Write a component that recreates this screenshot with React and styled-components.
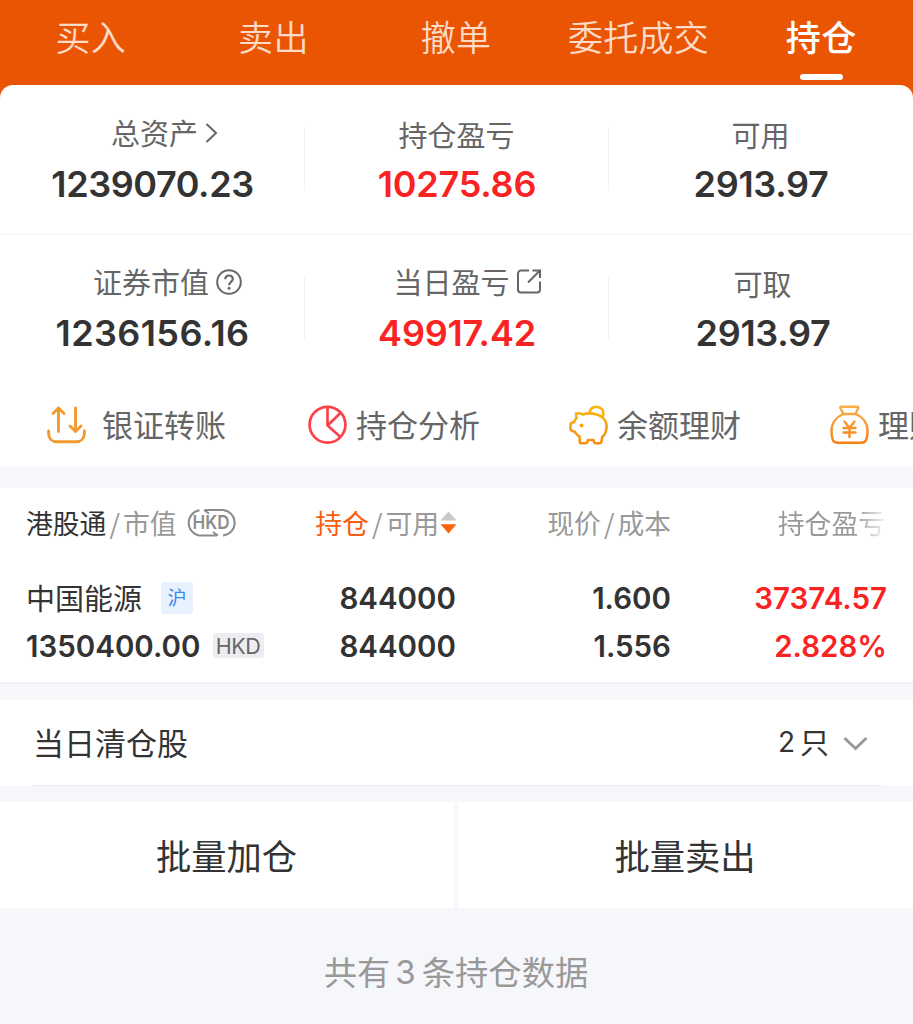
import React from 'react'
import styled, { createGlobalStyle } from 'styled-components'

const BRAND = '#ea5504'
const RED = '#fa2323'
const INK = '#333'
const GREY = '#666'
const LIGHT = '#999'
const CJK = '"Noto Sans CJK SC", sans-serif'
const NUM = 'Inter, "Noto Sans CJK SC", sans-serif'

const GlobalStyle = createGlobalStyle`
  * {
    box-sizing: border-box;
  }
  body {
    margin: 0;
    background: #f6f7fa;
    font-family: ${CJK};
    color: ${INK};
  }
`

const Page = styled.div`
  width: 913px;
  height: 1024px;
  overflow: hidden;
  white-space: nowrap;
`

const Top = styled.div`
  background: ${BRAND};
`

const Tabs = styled.nav`
  display: grid;
  grid-template-columns: repeat(5, 182.6px);
  height: 85px;
`

const Tab = styled.div`
  display: flex;
  flex-direction: column;
  align-items: center;
  padding: 11px 1px 0 0;
  font-size: 35px;
  line-height: 50px;
  letter-spacing: 0.3px;
  color: ${p => (p.$active ? '#fff' : '#fcdcc8')};
  font-weight: ${p => (p.$active ? 500 : 350)};
`

const TabBar = styled.div`
  width: 43px;
  height: 6px;
  margin: 13px 0 0 1px;
  border-radius: 3px;
  background: #fff;
`

const Summary = styled.section`
  height: 382px;
  border-radius: 13px 13px 0 0;
  background: #fff;
`

const StatRow = styled.div`
  display: grid;
  grid-template-columns: 305px 304px 304px;
  height: ${p => p.$height}px;
  border-bottom: ${p => (p.$line ? '2px solid #f7f7f7' : 'none')};
`

const Stat = styled.div`
  display: flex;
  flex-direction: column;
  align-items: center;
  padding-top: ${p => p.$top}px;
  padding-left: ${p => p.$indent || 0}px;
  background: linear-gradient(#f2f2f2, #f2f2f2) no-repeat right ${p => p.$top + 12}px / ${p => (p.$last ? '0 0' : '1px 64px')};
`

const StatLabel = styled.div`
  display: flex;
  align-items: center;
  height: 40px;
  padding-bottom: ${p => (p.$lift ? 7 : 3)}px;
  padding-left: ${p => p.$indent || 0}px;
  padding-right: 1px;
  font-size: 29px;
  line-height: 34px;
  color: ${GREY};

  svg {
    margin: 2px 0 0 ${p => p.$gap || 0}px;
  }
`

const StatValue = styled.div`
  margin-top: 9px;
  font: 600 36px/40px ${NUM};
  letter-spacing: ${p => p.$spacing || 0}px;
  color: ${p => (p.$up ? RED : INK)};
`

const Tools = styled.div`
  display: flex;
  padding: 16px 0 0 47px;
  overflow: hidden;
`

const Tool = styled.div`
  display: flex;
  align-items: center;
  flex: none;
  gap: ${p => p.$gap || 8}px;
  width: 261px;
  height: 48px;
  font-size: 31px;
  line-height: 46px;
  color: ${GREY};

  svg {
    flex: none;
  }
`

const ToolText = styled.span`
  padding-bottom: 2px;
`

const Holdings = styled.section`
  height: 196px;
  margin-top: 21px;
  padding-left: 26px;
  background: #fff;
  border-bottom: 2px solid #f0f1f4;
`

const Columns = styled.div`
  display: grid;
  grid-template-columns: 250px 180px 215px 216px;
  align-items: center;
  height: 48px;
`

const HeadRow = styled(Columns)`
  height: 69px;
  margin-bottom: 17px;
  font-size: 26.8px;
  line-height: 40px;
  color: ${LIGHT};

  svg {
    flex: none;
  }
`

const HeadCell = styled.div`
  display: flex;
  align-items: center;
  justify-content: ${p => (p.$left ? 'flex-start' : 'flex-end')};
  margin-right: ${p => p.$shift || 0}px;
`

const HeadText = styled.span`
  margin-right: ${p => p.$gap || 0}px;
`

const Strong = styled.span`
  color: ${p => (p.$brand ? '#f75d0c' : INK)};
`

const Slash = styled.span`
  margin: 0 3px;
`

const Faded = styled.span`
  background: linear-gradient(90deg, ${LIGHT} 72%, #f2f2f2 100%);
  background-clip: text;
  color: transparent;
`

const NameCell = styled.div`
  display: flex;
  align-items: center;
  font-size: 29px;
  line-height: 40px;
`

const StockName = styled.span`
  padding-bottom: 2px;
`

const Figure = styled.div`
  justify-self: ${p => (p.$left ? 'start' : 'end')};
  font: 600 29.5px/40px ${NUM};
  color: ${p => (p.$up ? RED : INK)};
`

const Market = styled.span`
  width: 32px;
  height: 32px;
  margin-left: 19px;
  border-radius: 3px;
  background: #e8f1fe;
  color: #3a87ea;
  font-size: 19px;
  line-height: 30px;
  text-align: center;
`

const Currency = styled.span`
  width: 51px;
  height: 25px;
  margin: 0 0 2px 12px;
  border-radius: 3px;
  background: #ededf1;
  color: ${GREY};
  font: 400 21.5px/26px ${NUM};
  letter-spacing: -0.4px;
  text-align: center;
`

const Cleared = styled.section`
  display: flex;
  align-items: center;
  justify-content: space-between;
  height: 86px;
  margin-top: 16px;
  padding: 0 45px 2px 33px;
  background: linear-gradient(#ececee, #ececee) no-repeat 32px 100% / 849px 1px, #fff;
  font-size: 31px;
  line-height: 48px;
`

const Count = styled.div`
  display: flex;
  align-items: center;
  padding-bottom: 2px;
  font-size: 29px;

  b {
    margin: 2px 5px 0 0;
    font: 400 28px/48px ${NUM};
  }

  svg {
    margin: 5px 0 0 14px;
  }
`

const Actions = styled.div`
  display: grid;
  grid-template-columns: 454px 455px;
  gap: 4px;
  margin-top: 16px;
`

const Action = styled.button`
  height: 106px;
  padding: 0 1px 0 0;
  border: 0;
  background: #fff;
  color: ${INK};
  font: 400 35.3px/50px ${CJK};
`

const Footer = styled.footer`
  display: flex;
  justify-content: center;
  padding: 39px 1px 0 0;
  font-size: 33.3px;
  line-height: 48px;
  color: ${LIGHT};

  b {
    margin: 0 6px 0 5px;
    font: 400 33px/50px ${NUM};
  }
`

const Chevron = () => (
  <svg width="13" height="20" viewBox="0 0 13 20" fill="none" stroke={GREY} strokeWidth="2">
    <path d="M1.5 1L11 10L1.5 19" />
  </svg>
)

const Help = () => (
  <svg width="26" height="26" viewBox="0 0 26 26" fill="none" stroke={GREY} strokeWidth="2">
    <circle cx="13" cy="13" r="11.8" />
    <path d="M9.3 10.3C9.3 8 10.8 6.5 13 6.5S16.8 8 16.8 10.1C16.8 12.7 13.1 13 13.1 16.2" strokeWidth="2.2" />
    <circle cx="13.1" cy="19.3" r="1.5" fill={GREY} stroke="none" />
  </svg>
)

const OpenOut = () => (
  <svg width="24" height="25" viewBox="0 0 24 25" fill="none" stroke={GREY} strokeWidth="2">
    <path d="M12 1.5H4A3 3 0 0 0 1 4.5V20.5A3 3 0 0 0 4 23.5H20A3 3 0 0 0 23 20.5V12.5" />
    <path d="M15.5 1.5H23V9M22.5 2L11 13.5" />
  </svg>
)

const Transfer = () => (
  <svg width="39" height="40" viewBox="0 0 39 40" fill="none" stroke="#f29a2e" strokeWidth="2.9" strokeLinecap="round" strokeLinejoin="round">
    <path d="M11.5 26.5V3M6 8.5L11.5 3L17 8.5" />
    <path d="M28.5 3V26.5M23 21L28.5 26.5L34 21" />
    <path d="M1.6 26V28.5C1.6 33.5 5 36.8 10 36.8H29C34 36.8 37.4 33.5 37.4 28.5V26" />
  </svg>
)

const Pie = () => (
  <svg width="39" height="40" viewBox="0 0 39 40" fill="none" stroke="#fb4248" strokeWidth="2.7">
    <circle cx="19.5" cy="19.7" r="17.9" />
    <path d="M19.5 2V20.5L32.5 32M19.5 20.5L32.5 8" />
  </svg>
)

const Piggy = () => (
  <svg width="40" height="40" viewBox="0 0 40 40" fill="none" stroke="url(#piggy)" strokeWidth="2.6" strokeLinejoin="round" strokeLinecap="round">
    <defs>
      <linearGradient id="piggy" x1="0" y1="0" x2="0" y2="40" gradientUnits="userSpaceOnUse">
        <stop offset="0" stopColor="#fbb90e" />
        <stop offset="1" stopColor="#f58a18" />
      </linearGradient>
    </defs>
    <path d="M7 8.5C9.5 8 12 8.5 13.5 9.5C20 7.5 28 8.3 33 12C36.5 14.7 38 18.5 37.5 23C37.2 27.5 35.5 30 33.2 32L32.3 37.3Q32 38.2 31 38.2H26.5Q25.5 38.2 25.2 37.3L24.5 35H19L18.2 37.3Q17.8 38.2 16.8 38.2H12Q11 38.2 10.9 37.2L10.5 31.5C8.5 30.5 7 29 6 27L2.5 25.5Q1.5 25 1.5 24V19.5Q1.5 18.3 2.5 18L5 17C5.5 15.5 6.5 14.3 7.5 13.2Z" />
    <path d="M20.5 8.2C21 4.5 23.5 1.9 27.5 1.9C32 1.9 35 5.5 34.3 9.5C34.1 10.7 33.7 11.5 33.2 12" />
    <circle cx="12.5" cy="20.5" r="2" fill="#f9a313" stroke="none" />
  </svg>
)

const MoneyBag = () => (
  <svg width="39" height="40" viewBox="0 0 39 40" fill="none" stroke="url(#bag)" strokeWidth="2.4" strokeLinejoin="round" strokeLinecap="round">
    <defs>
      <linearGradient id="bag" x1="0" y1="0" x2="0" y2="40" gradientUnits="userSpaceOnUse">
        <stop offset="0" stopColor="#f8b04a" />
        <stop offset="1" stopColor="#f87d16" />
      </linearGradient>
    </defs>
    <path d="M11.3 1.8H27.2Q28.8 1.8 28.1 3.3L25.5 9H13.5L10.4 3.3Q9.8 1.8 11.3 1.8Z" />
    <path d="M13.5 9C6 12 1.5 18.5 1.5 26C1.5 30 2 33 2.8 35C3.8 37.3 5.5 37.7 8 37.7H31C33.5 37.7 35.2 37.3 36 35C37 33 37.5 30 37.5 26C37.5 18.5 33 12 25.5 9" />
    <path d="M14.5 16.5L19.5 23L24.5 16.5M13.5 23H25.5M13.5 27.5H25.5M19.5 23V32" />
  </svg>
)

const HkdPill = () => (
  <svg width="52" height="30" viewBox="0 0 52 30" fill="none" stroke="#8c8c8c" strokeWidth="2">
    <path d="M14.5 2.3A12.8 12.8 0 0 0 14 27.5H32M20 2H38A12.8 12.8 0 0 1 38 27.5M19 2L24 5.5M33 27.5L28 24" />
    <text x="26" y="21.4" textAnchor="middle" textLength="37" lengthAdjust="spacingAndGlyphs" fontFamily="Inter, sans-serif" fontSize="19" fontWeight="600" fill="#8c8c8c" stroke="none">HKD</text>
  </svg>
)

const SortArrows = () => (
  <svg width="17" height="24" viewBox="0 0 17 24">
    <path d="M8.5 0.5L16.5 9.5H0.5Z" fill="#c8c8c8" />
    <path d="M0.5 13.3H16.5L8.5 22.5Z" fill="#fb640f" />
  </svg>
)

const Down = () => (
  <svg width="25" height="15" viewBox="0 0 25 15" fill="none" stroke={LIGHT} strokeWidth="3">
    <path d="M1.5 2L12.5 12.5L23.5 2" />
  </svg>
)

const tabs = ['买入', '卖出', '撤单', '委托成交', '持仓']

const tools = [
  { text: '银证转账', icon: <Transfer />, gap: 16 },
  { text: '持仓分析', icon: <Pie />, gap: 9 },
  { text: '余额理财', icon: <Piggy /> },
  { text: '理财', icon: <MoneyBag />, gap: 9 }
]

const App = () => (
  <Page>
    <GlobalStyle />
    <Top>
      <Tabs>
        {tabs.map(t => (
          <Tab key={t} $active={t === '持仓'}>
            {t}
            {t === '持仓' && <TabBar />}
          </Tab>
        ))}
      </Tabs>
      <Summary>
        <StatRow $height={150} $line>
          <Stat $top={30}>
            <StatLabel $lift $gap={7} $indent={25}>总资产<Chevron /></StatLabel>
            <StatValue $spacing={-0.4}>1239070.23</StatValue>
          </Stat>
          <Stat $top={30}>
            <StatLabel>持仓盈亏</StatLabel>
            <StatValue $up $spacing={-0.2}>10275.86</StatValue>
          </Stat>
          <Stat $top={30} $last>
            <StatLabel>可用</StatLabel>
            <StatValue $spacing={-0.3}>2913.97</StatValue>
          </Stat>
        </StatRow>
        <StatRow $height={150}>
          <Stat $top={29}>
            <StatLabel $lift $gap={7} $indent={31}>证券市值<Help /></StatLabel>
            <StatValue $spacing={0.4}>1236156.16</StatValue>
          </Stat>
          <Stat $top={29}>
            <StatLabel $lift $gap={7} $indent={21}>当日盈亏<OpenOut /></StatLabel>
            <StatValue $up $spacing={-0.2}>49917.42</StatValue>
          </Stat>
          <Stat $top={29} $indent={4} $last>
            <StatLabel>可取</StatLabel>
            <StatValue $spacing={-0.3}>2913.97</StatValue>
          </Stat>
        </StatRow>
        <Tools>
          {tools.map(t => (
            <Tool key={t.text} $gap={t.gap}>
              {t.icon}
              <ToolText>{t.text}</ToolText>
            </Tool>
          ))}
        </Tools>
      </Summary>
    </Top>
    <Holdings>
      <HeadRow>
        <HeadCell $left>
          <HeadText $gap={8}><Strong>港股通</Strong><Slash>/</Slash>市值</HeadText><HkdPill />
        </HeadCell>
        <HeadCell $shift={-1}>
          <HeadText $gap={1}><Strong $brand>持仓</Strong><Slash>/</Slash>可用</HeadText><SortArrows />
        </HeadCell>
        <HeadCell><HeadText>现价<Slash>/</Slash>成本</HeadText></HeadCell>
        <HeadCell $shift={2}><Faded>持仓盈亏</Faded></HeadCell>
      </HeadRow>
      <Columns>
        <NameCell><StockName>中国能源</StockName><Market>沪</Market></NameCell>
        <Figure>844000</Figure>
        <Figure>1.600</Figure>
        <Figure $up>37374.57</Figure>
      </Columns>
      <Columns>
        <NameCell><Figure $left>1350400.00</Figure><Currency>HKD</Currency></NameCell>
        <Figure>844000</Figure>
        <Figure>1.556</Figure>
        <Figure $up>2.828%</Figure>
      </Columns>
    </Holdings>
    <Cleared>
      当日清仓股
      <Count><b>2</b>只<Down /></Count>
    </Cleared>
    <Actions>
      <Action>批量加仓</Action>
      <Action>批量卖出</Action>
    </Actions>
    <Footer>共有<b>3</b>条持仓数据</Footer>
  </Page>
)

export default App
